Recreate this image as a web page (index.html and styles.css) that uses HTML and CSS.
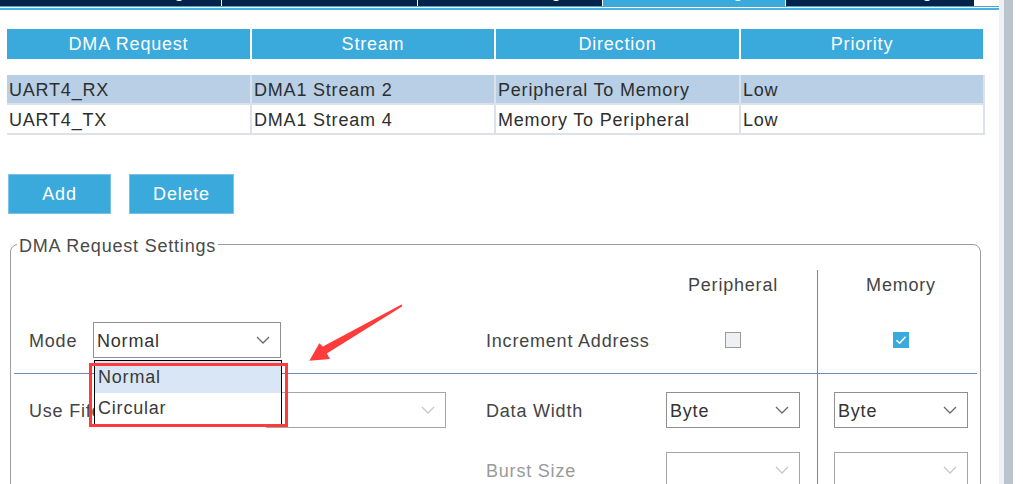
FILE: index.html
```html
<!DOCTYPE html>
<html>
<head>
<meta charset="utf-8">
<title>DMA Settings</title>
<link rel="stylesheet" href="styles.css">
</head>
<body>
<div class="screen">
  <div class="main">
    <div class="tabs">
      <div class="tab t1"><span>Parameter Settings</span></div>
      <div class="tab t2"><span>User Constants</span></div>
      <div class="tab t3"><span>NVIC Settings</span></div>
      <div class="tab t4 active"><span>DMA Settings</span></div>
      <div class="tab t5"><span>GPIO Settings</span></div>
    </div>
    <div class="rule rule1"></div>
    <div class="rule-gap"></div>
    <div class="rule rule2"></div>

    <div class="content">
      <div class="thead">
        <div class="th">DMA Request</div>
        <div class="th">Stream</div>
        <div class="th">Direction</div>
        <div class="th">Priority</div>
      </div>
      <div class="tbody">
        <div class="td sel">UART4_RX</div>
        <div class="td sel">DMA1 Stream 2</div>
        <div class="td sel">Peripheral To Memory</div>
        <div class="td sel">Low</div>
        <div class="td">UART4_TX</div>
        <div class="td">DMA1 Stream 4</div>
        <div class="td">Memory To Peripheral</div>
        <div class="td">Low</div>
      </div>

      <div class="buttons">
        <button class="btn btn-add">Add</button>
        <button class="btn btn-del">Delete</button>
      </div>

      <fieldset class="settings">
        <legend>DMA Request Settings</legend>
        <div class="grid">
          <div class="colhead c-per">Peripheral</div>
          <div class="colhead c-mem">Memory</div>
          <div class="vline"></div>

          <div class="left r2">
            <span class="label lbl-mode">Mode</span>
            <div class="select mode">
              <span class="value">Normal</span>
              <svg class="chev" width="14" height="8" viewBox="0 0 14 8"><polyline points="1,1 7,7 13,1" fill="none" stroke="#6a6a6a" stroke-width="1.3"/></svg>
              <ul class="dropdown">
                <li class="hl">Normal</li>
                <li>Circular</li>
              </ul>
              <div class="callout"></div>
            </div>
          </div>
          <div class="rlabel r2">Increment Address</div>
          <div class="cell c-per r2"><span class="check"></span></div>
          <div class="cell c-mem r2"><span class="check on"><svg width="16" height="16" viewBox="0 0 16 16"><polyline points="3.5,8.2 6.6,11.2 12.5,4.8" fill="none" stroke="#fff" stroke-width="1.6"/></svg></span></div>

          <div class="hline"></div>

          <div class="left r4">
            <span class="label lbl-fifo">Use Fifo</span>
            <div class="select fifo disabled">
              <span class="value"></span>
              <svg class="chev" width="14" height="8" viewBox="0 0 14 8"><polyline points="1,1 7,7 13,1" fill="none" stroke="#c8c8c8" stroke-width="1.3"/></svg>
            </div>
          </div>
          <div class="rlabel r4">Data Width</div>
          <div class="cell c-per r4">
            <div class="select small">
              <span class="value">Byte</span>
              <svg class="chev" width="14" height="8" viewBox="0 0 14 8"><polyline points="1,1 7,7 13,1" fill="none" stroke="#6a6a6a" stroke-width="1.3"/></svg>
            </div>
          </div>
          <div class="cell c-mem r4">
            <div class="select small">
              <span class="value">Byte</span>
              <svg class="chev" width="14" height="8" viewBox="0 0 14 8"><polyline points="1,1 7,7 13,1" fill="none" stroke="#6a6a6a" stroke-width="1.3"/></svg>
            </div>
          </div>

          <div class="rlabel r5 dim">Burst Size</div>
          <div class="cell c-per r5">
            <div class="select small disabled">
              <span class="value"></span>
              <svg class="chev" width="14" height="8" viewBox="0 0 14 8"><polyline points="1,1 7,7 13,1" fill="none" stroke="#c8c8c8" stroke-width="1.3"/></svg>
            </div>
          </div>
          <div class="cell c-mem r5">
            <div class="select small disabled">
              <span class="value"></span>
              <svg class="chev" width="14" height="8" viewBox="0 0 14 8"><polyline points="1,1 7,7 13,1" fill="none" stroke="#c8c8c8" stroke-width="1.3"/></svg>
            </div>
          </div>
        </div>
      </fieldset>
    </div>
  </div>
  <div class="track"></div>
  <div class="thumb"></div>

  <svg class="arrow" width="110" height="70" viewBox="0 0 110 70">
    <polygon points="9.3,65.7 19.3,48.3 22.9,51.6 101.5,9.6 102.4,11.2 26.8,58.4 30,64" fill="#ff3b3b"/>
  </svg>
</div>
</body>
</html>
```

FILE: styles.css
```css
* { box-sizing: border-box; }
html, body { margin: 0; padding: 0; }
body {
  width: 1023px;
  height: 484px;
  overflow: hidden;
  background: #fff;
  font-family: "Liberation Sans", Arial, sans-serif;
  font-size: 18px;
  letter-spacing: 0.8px;
  color: #333;
}
.screen { display: flex; height: 484px; position: relative; }
.main { width: 999px; flex: none; }
.track { width: 5px; flex: none; background: #eef0f3; }
.thumb { width: 9px; flex: none; background: #b9c4cc; }

/* tabs */
.tabs { display: flex; height: 6px; width: 974px; }
.tab {
  height: 6px;
  overflow: hidden;
  background: #03234b;
  border-right: 1px solid #fff;
  display: flex;
  justify-content: center;
  align-items: flex-start;
  color: #fff;
  flex: none;
}
.tab span { display: block; line-height: 18px; margin-top: -18px; white-space: nowrap; }
.t1 { width: 222px; }
.t2 { width: 196px; }
.t3 { width: 185px; }
.t4 { width: 183px; }
.t5 { width: 188px; border-right: none; }
.tab.active { background: #3aa9dc; }

.rule { background: #3aa9dc; }
.rule1 { height: 1px; width: 1000px; }
.rule-gap { height: 1px; }
.rule2 { height: 2px; width: 999px; background: #4db1de; }

/* table */
.content { padding-left: 7px; }
.thead {
  margin-top: 19px;
  display: grid;
  grid-template-columns: 243px 242px 243px 242px;
  column-gap: 2px;
  height: 30px;
}
.th {
  background: #3aa9dc;
  color: #fff;
  text-align: center;
  line-height: 30px;
}
.tbody {
  margin-top: 16px;
  display: grid;
  grid-template-columns: 243px 242px 243px 242px;
  grid-auto-rows: 28px;
  gap: 2px;
  padding: 0 2px 2px 0;
  background: #dde2e8;
  width: 978px;
}
.td {
  background: #fff;
  line-height: 26px;
  padding: 2px 0 0 2px;
  color: #2e2e2e;
  white-space: nowrap;
}
.td.sel { background: #b8cfe6; }

/* buttons */
.buttons { margin-top: 39px; margin-left: 1px; display: flex; gap: 18px; }
.btn {
  height: 40px;
  background: #3aa9dc;
  border: 1px solid #7cc2e6;
  color: #fff;
  font-family: inherit;
  font-size: 18px;
  letter-spacing: 0.8px;
  padding: 0;
}
.btn-add { width: 103px; }
.btn-del { width: 105px; }

/* fieldset */
.settings {
  margin: 18px 0 0 3px;
  width: 971px;
  border: 1px solid #9c9c9c;
  border-radius: 8px;
  padding: 0 3px;
  min-width: 0;
}
.settings legend {
  margin-left: 3px;
  padding: 3px 2px 0;
  line-height: 22px;
  color: #4a4a4a;
}
.grid {
  margin-top: 13px;
  display: grid;
  grid-template-columns: 456px 196px 134px 17px 1px 16px 134px 9px;
  grid-template-rows: 37px 66px 1px 72px 48px;
}
.colhead {
  grid-row: 1;
  text-align: center;
  line-height: 28px;
  padding-top: 1px;
  color: #444;
}
.c-per { grid-column: 3; }
.c-mem { grid-column: 7; }
.r2 { grid-row: 2; }
.r4 { grid-row: 4; }
.r5 { grid-row: 5; }
.vline { grid-column: 5; grid-row: 1 / 6; background: #7086bb; }
.hline { grid-column: 1 / -1; grid-row: 3; background: #7086bb; }

.left { grid-column: 1; display: flex; align-items: center; padding-left: 15px; }
.label { color: #444; white-space: nowrap; padding-top: 2px; }
.lbl-mode { width: 64px; }
.lbl-fifo { width: 237px; }
.rlabel { grid-column: 2; display: flex; align-items: center; padding: 2px 0 0 16px; color: #444; white-space: nowrap; }
.rlabel.dim { color: #9a9a9a; }
.cell { display: flex; align-items: center; justify-content: center; }

.select {
  height: 36px;
  border: 1px solid #8f8f8f;
  background: #fff;
  display: flex;
  align-items: center;
  justify-content: space-between;
  padding: 0 10px 0 3px;
  color: #333;
}
.select .value { padding-top: 2px; }
.select.mode { width: 188px; position: relative; z-index: 5; }
.select.fifo { width: 180px; }
.select.small { width: 134px; }
.select.disabled { border-color: #a6a6a6; }
.chev { display: block; flex: none; }

.dropdown {
  position: absolute;
  left: 0;
  top: 37px;
  width: 188px;
  height: 65px;
  margin: 0;
  padding: 0;
  list-style: none;
  background: #fff;
  border: 1px solid #000;
}
.dropdown li { height: 31px; line-height: 31px; padding-left: 3px; color: #3a3a3a; }
.dropdown li.hl { height: 32px; line-height: 32px; background: #d8e6f5; }
.callout {
  position: absolute;
  left: -5px;
  top: 40px;
  width: 199px;
  height: 64px;
  border: 3px solid #ff3b3b;
}

.check {
  display: block;
  width: 16px;
  height: 16px;
  border: 1px solid #9a9a9a;
  background: #eef0f3;
}
.check.on { border: none; background: #3aa9dc; }
.check svg { display: block; }

.arrow { position: absolute; left: 300px; top: 295px; }
```
